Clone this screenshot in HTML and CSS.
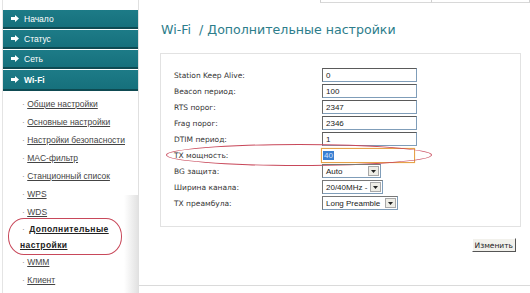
FILE: index.html
```html
<!DOCTYPE html>
<html lang="ru">
<head>
  <meta charset="UTF-8" />
  <title>Wi-Fi / Дополнительные настройки</title>
  <link rel="stylesheet" href="styles.css">
</head>
<body>
  <div class="page">
    <aside class="sidebar">
      <ul class="menu">
        <li class="menu-item"><span class="arrow"><svg width="8" height="7" viewBox="0 0 8 7"><polygon points="0,2 4,2 4,0 8,3.5 4,7 4,5 0,5" fill="#fff"/></svg></span>Начало</li>
        <li class="menu-item"><span class="arrow"><svg width="8" height="7" viewBox="0 0 8 7"><polygon points="0,2 4,2 4,0 8,3.5 4,7 4,5 0,5" fill="#fff"/></svg></span>Статус</li>
        <li class="menu-item"><span class="arrow"><svg width="8" height="7" viewBox="0 0 8 7"><polygon points="0,2 4,2 4,0 8,3.5 4,7 4,5 0,5" fill="#fff"/></svg></span>Сеть</li>
        <li class="menu-item active"><span class="arrow"><svg width="8" height="7" viewBox="0 0 8 7"><polygon points="0,2 4,2 4,0 8,3.5 4,7 4,5 0,5" fill="#fff"/></svg></span>Wi-Fi</li>
      </ul>
      <ul class="submenu">
        <li><span class="dot">·</span> <a href="#">Общие настройки</a></li>
        <li><span class="dot">·</span> <a href="#">Основные настройки</a></li>
        <li><span class="dot">·</span> <a href="#">Настройки безопасности</a></li>
        <li><span class="dot">·</span> <a href="#">MAC-фильтр</a></li>
        <li><span class="dot">·</span> <a href="#">Станционный список</a></li>
        <li><span class="dot">·</span> <a href="#">WPS</a></li>
        <li><span class="dot">·</span> <a href="#">WDS</a></li>
        <li class="current"><a href="#">Дополнительные настройки</a><span class="mark mark-side"></span></li>
        <li><span class="dot">·</span> <a href="#">WMM</a></li>
        <li><span class="dot">·</span> <a href="#">Клиент</a></li>
      </ul>
      <div class="shade"></div>
    </aside>

    <main class="content">
      <div class="topbar">
        <span class="tab tab-a"></span>
        <span class="tab tab-b"></span>
      </div>
      <h1 class="title">Wi-Fi&nbsp; / Дополнительные настройки</h1>

      <div class="form-box">
        <div class="row"><span class="label">Station Keep Alive:</span><span class="input">0</span></div>
        <div class="row"><span class="label">Beacon период:</span><span class="input">100</span></div>
        <div class="row"><span class="label">RTS порог:</span><span class="input">2347</span></div>
        <div class="row"><span class="label">Frag порог:</span><span class="input">2346</span></div>
        <div class="row"><span class="label">DTIM период:</span><span class="input">1</span></div>
        <div class="row"><span class="label">TX мощность:</span><span class="input focused"><span class="sel">40</span></span><span class="mark mark-row"></span></div>
        <div class="row"><span class="label">BG защита:</span><span class="select w-auto"><span class="value">Auto</span><span class="drop"><svg width="5" height="3" viewBox="0 0 5 3"><polygon points="0,0 5,0 2.5,3" fill="#222"/></svg></span></span></div>
        <div class="row"><span class="label">Ширина канала:</span><span class="select w-band"><span class="value">20/40MHz -</span><span class="drop"><svg width="5" height="3" viewBox="0 0 5 3"><polygon points="0,0 5,0 2.5,3" fill="#222"/></svg></span></span></div>
        <div class="row"><span class="label">TX преамбула:</span><span class="select w-pre"><span class="value">Long Preamble</span><span class="drop"><svg width="5" height="3" viewBox="0 0 5 3"><polygon points="0,0 5,0 2.5,3" fill="#222"/></svg></span></span></div>
      </div>

      <div class="actions">
        <button class="btn">Изменить</button>
      </div>

      <div class="bottom-line"></div>
    </main>
  </div>
</body>
</html>
```

FILE: styles.css
```css
* {margin:0; padding:0; box-sizing:border-box;}
body {font-family: "Liberation Sans", Arial, sans-serif; background: #fff; width: 530px; height: 293px; overflow: hidden;}

.page {
  display: flex;
  height: 293px;
}

/* left menu */
.sidebar {
  position: relative;
  width: 137px;
  padding: 10px 0 0 3px;
  border-left: 1px solid #e4e4e4;
  border-right: 1px solid #e0e0e0;
  margin-left: 2px;
}

.menu {list-style: none;}

.menu-item {
  display: flex;
  align-items: center;
  height: 19px;
  margin-bottom: 1px;
  margin-left: -3px;
  padding-left: 8px;
  background: linear-gradient(#1d7b87, #16707c);
  border-bottom: 2px solid #0e4a52;
  color: #fff;
  font-size: 8.5px;
}

.menu-item.active {font-weight: bold; height: 21px;}

.arrow {display: inline-flex; margin-right: 5px;}

.submenu {
  list-style: none;
  padding: 3px 0 0 14px;
  font-size: 8.5px;
  line-height: 18px;
}

.submenu a {color: #444; text-decoration: underline;}
.dot {color: #999; margin-left: 2px;}

.submenu .current {line-height: 16px; position: relative; font-weight: bold; padding-right: 20px;}
.submenu .current a {color: #222; letter-spacing: 0.4px;}
.submenu .current a::before {
  content: "·";
  display: inline-block;
  color: #999;
  font-weight: normal;
  margin: 0 4px 0 2px;
}

.mark {
  position: absolute;
  border: 1px solid #c8485a;
  border-radius: 16px / 18px;
}

.mark-side {left: -12px; top: -3px; width: 114px; height: 37px;}

.shade {
  position: absolute;
  right: 0;
  top: 195px;
  bottom: 0;
  width: 14px;
  background: linear-gradient(to right, rgba(255,255,255,0), #e2e2e2);
}

/* main */
.content {
  position: relative;
  flex: 1;
}

.topbar {
  display: flex;
  height: 4px;
  padding-left: 181px;
}

.tab {
  height: 3px;
  border-bottom: 1px solid #d8d8d8;
  border-right: 1px solid #d0d0d0;
}
.tab-a {width: 112px; border-left: 1px solid #d0d0d0;}
.tab-b {flex: 1;}

.title {
  margin: 17px 0 0 22px;
  font-family: "DejaVu Sans", sans-serif;
  font-size: 12.6px;
  font-weight: normal;
  color: #2d7d8b;
  line-height: 18px;
}

.form-box {
  position: relative;
  margin: 14px 0 0 21px;
  width: 361px;
  padding: 13px 0 15px 13px;
  border: 1px solid #e2e2e2;
}

.row {
  display: flex;
  align-items: center;
  height: 16px;
  position: relative;
}

.label {
  width: 148px;
  font-family: "DejaVu Sans", sans-serif;
  font-size: 7.5px;
  color: #333;
}

.input {
  display: flex;
  align-items: center;
  width: 95px;
  height: 14px;
  padding-left: 3px;
  border: 1px solid #7f9db9;
  border-top-color: #5a5a5a;
  border-left-color: #6a6a6a;
  font-size: 8px;
  color: #222;
}

.input.focused {
  width: 94px;
  height: 15px;
  margin-left: -1px;
  padding-left: 1px;
  border: 1px solid #e6a34a;
  box-shadow: 0 0 1px #f5c880;
}

.sel {background: #3a7fd0; color: #cfe0ff; padding: 0 1px;}

.mark-row {left: -8px; top: -3px; width: 266px; height: 22px; border-radius: 50% / 50%;}

.select {
  display: flex;
  align-items: center;
  justify-content: space-between;
  height: 14px;
  padding: 0 1px 0 3px;
  border: 1px solid #7f9db9;
  border-top-color: #777;
  border-left-color: #777;
  font-size: 8px;
  color: #222;
}

.w-auto {width: 59px;}
.w-band {width: 61px;}
.w-pre {width: 76px;}

.drop {
  display: flex;
  align-items: center;
  justify-content: center;
  width: 11px;
  height: 10px;
  background: #eeede6;
  border: 1px solid #a8a8a8;
}

.actions {
  display: flex;
  justify-content: flex-end;
  width: 377px;
  margin-top: 11px;
}

.btn {
  font-family: "DejaVu Sans", sans-serif;
  font-size: 7.5px;
  color: #222;
  height: 14px;
  padding: 0 2px;
  background: #f2f1ec;
  border: 1px solid;
  border-color: #fff #555 #555 #fff;
}

.bottom-line {
  position: absolute;
  left: 0;
  right: 0;
  top: 285px;
  border-top: 1px solid #dadada;
}
```
